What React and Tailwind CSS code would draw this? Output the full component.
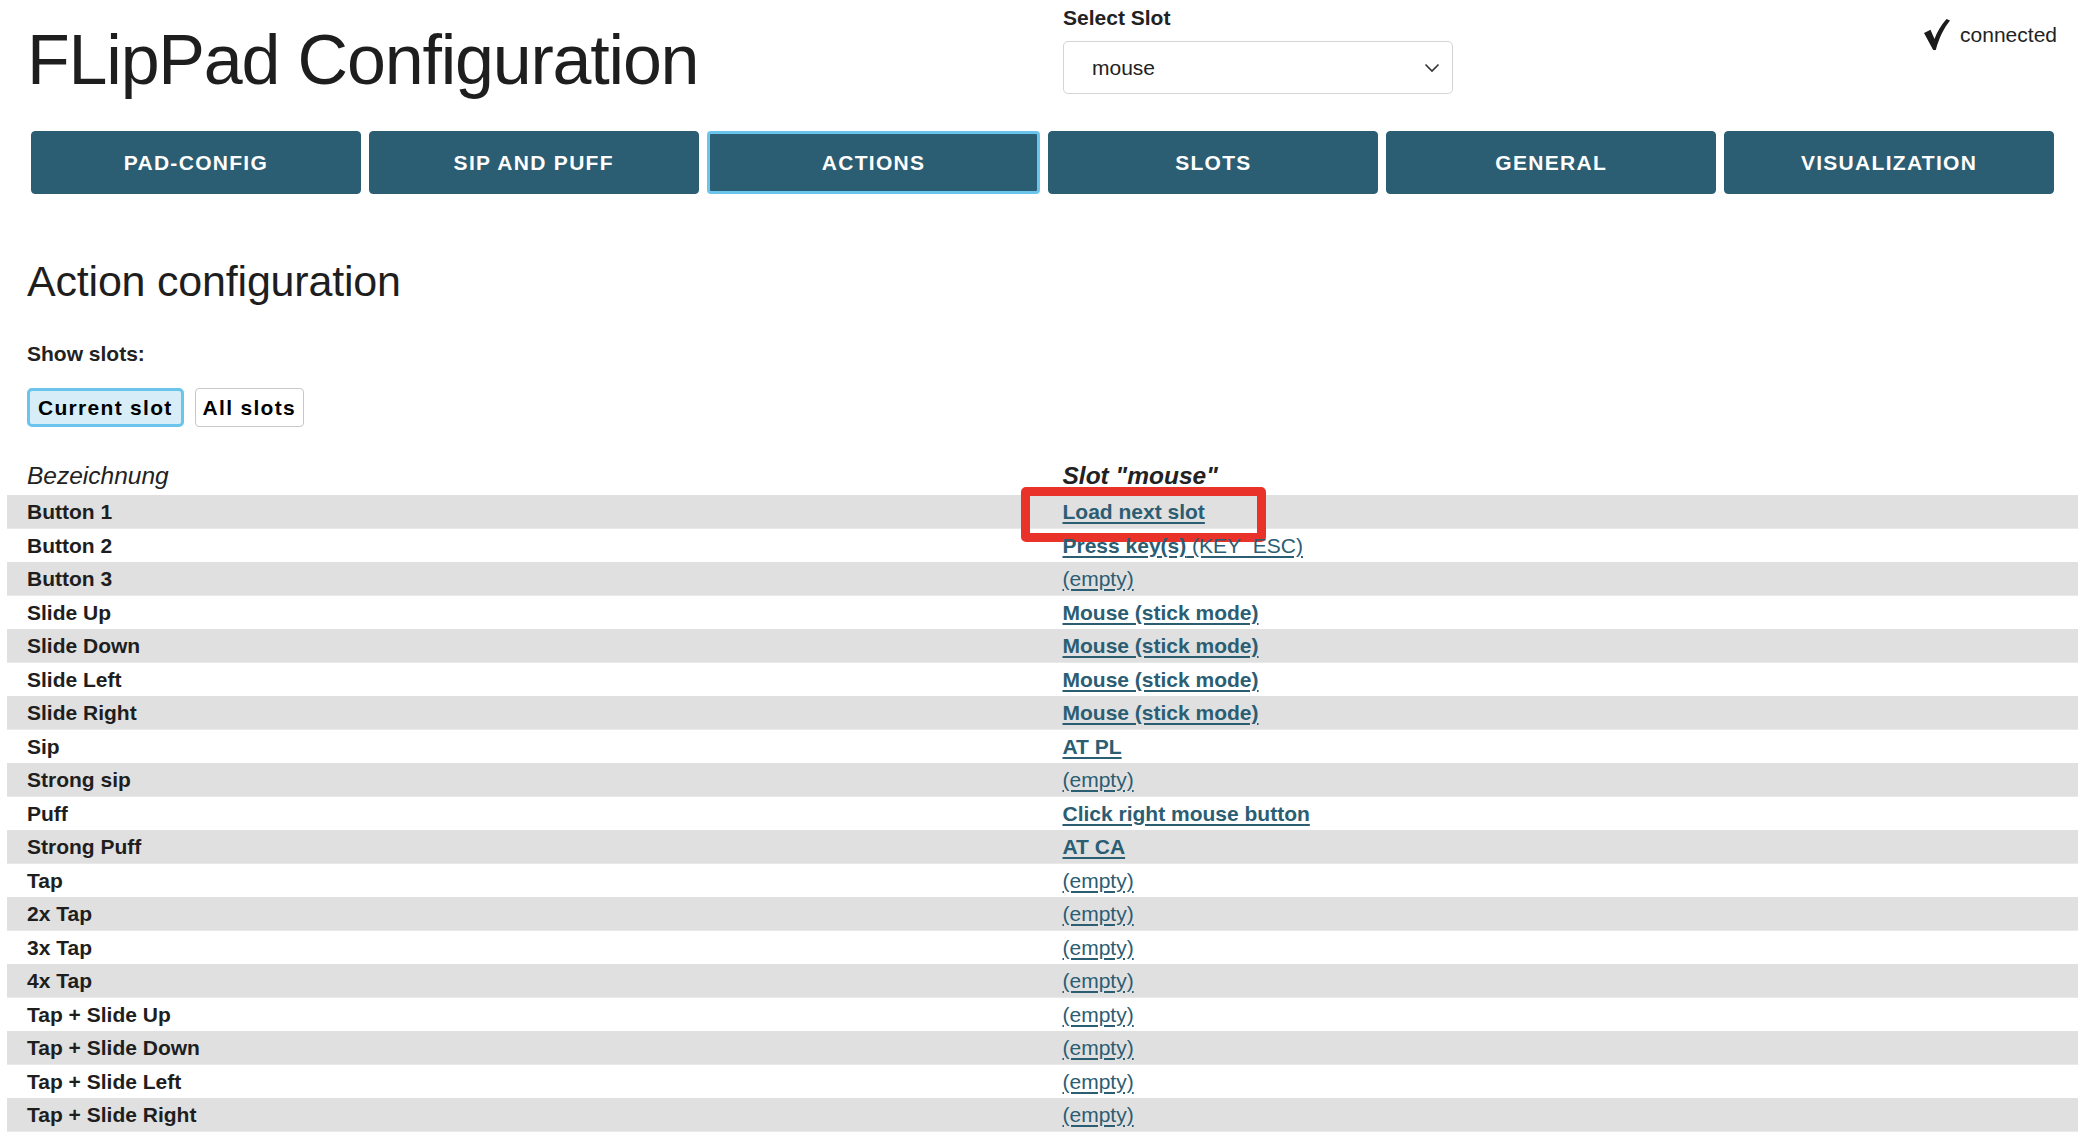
import { useState } from 'react';

const tabs = ['PAD-CONFIG', 'SIP AND PUFF', 'ACTIONS', 'SLOTS', 'GENERAL', 'VISUALIZATION'];

// action rows: [label, bold part, normal part]
const rows = [
  ['Button 1', 'Load next slot', ''],
  ['Button 2', 'Press key(s)', ' (KEY_ESC)'],
  ['Button 3', '', '(empty)'],
  ['Slide Up', 'Mouse (stick mode)', ''],
  ['Slide Down', 'Mouse (stick mode)', ''],
  ['Slide Left', 'Mouse (stick mode)', ''],
  ['Slide Right', 'Mouse (stick mode)', ''],
  ['Sip', 'AT PL', ''],
  ['Strong sip', '', '(empty)'],
  ['Puff', 'Click right mouse button', ''],
  ['Strong Puff', 'AT CA', ''],
  ['Tap', '', '(empty)'],
  ['2x Tap', '', '(empty)'],
  ['3x Tap', '', '(empty)'],
  ['4x Tap', '', '(empty)'],
  ['Tap + Slide Up', '', '(empty)'],
  ['Tap + Slide Down', '', '(empty)'],
  ['Tap + Slide Left', '', '(empty)'],
  ['Tap + Slide Right', '', '(empty)'],
];

function CheckIcon() {
  return (
    <svg width="26" height="31" viewBox="0 0 26 31" className="shrink-0">
      <path
        d="M0 14 L6.5 10.7 L10.5 20 C13 13 17 6 22.5 0 L26 1.5 C20 9 15 19 11.8 31 L9.2 31 Z"
        fill="#1c1c1c"
      />
    </svg>
  );
}

export default function App() {
  const [activeTab, setActiveTab] = useState('ACTIONS');
  const [showAll, setShowAll] = useState(false);

  return (
    <div className="min-h-screen bg-white text-[#222] text-[21px] font-['Liberation_Sans',Arial,sans-serif] overflow-hidden">
      {/* Header */}
      <div className="grid grid-cols-[1036px_1fr] pl-[27px] pr-[37px]">
        <h1 className="mt-[25px] text-[70px] leading-none tracking-[-1.2px] font-normal text-[#1e1e1e]">
          FLipPad Configuration
        </h1>
        <div className="flex justify-between">
          <div>
            <div className="mt-[6px] h-[24px] leading-[24px] font-bold text-[21px]">Select Slot</div>
            <div className="mt-[11px] w-[390px] h-[53px] border border-[#d4d4d4] rounded-[5px] flex items-center justify-between pl-[28px] pr-[12px]">
              <span>mouse</span>
              <svg width="16" height="10" viewBox="0 0 16 10" fill="none">
                <path d="M1.5 1.5 L8 8 L14.5 1.5" stroke="#333" strokeWidth="1.6" />
              </svg>
            </div>
          </div>
          <div className="flex items-center gap-[10px] h-[31px] mt-[19px]">
            <CheckIcon />
            <span className="text-[21px] text-[#222]">connected</span>
          </div>
        </div>
      </div>

      {/* Tabs */}
      <div className="flex gap-[8px] mt-[36px] pl-[31px] pr-[40px]">
        {tabs.map((tab) => (
          <button
            key={tab}
            onClick={() => setActiveTab(tab)}
            className={
              'flex-1 h-[63px] rounded-[4px] bg-[#2b5d73] text-white font-bold text-[21px] tracking-[1.3px] ' +
              (activeTab === tab ? 'border-[3px] border-[#6ac4ec]' : 'border border-[#2b5d73]')
            }
          >
            {tab}
          </button>
        ))}
      </div>

      {/* Action configuration */}
      <div className="pl-[27px]">
        <h2 className="mt-[66px] text-[43px] leading-none tracking-[-0.2px] font-normal text-[#1e1e1e]">
          Action configuration
        </h2>
        <div className="mt-[39px] h-[24px] leading-[24px] font-bold">Show slots:</div>
        <div className="mt-[22px] flex gap-[11px]">
          <button
            onClick={() => setShowAll(false)}
            className={
              'h-[39px] rounded-[5px] font-bold tracking-[1.3px] text-black ' +
              (!showAll ? 'bg-[#d7eef9] border-[3px] border-[#6ac4ec] px-[8px]' : 'bg-white border border-[#c8c8c8] px-[10px]')
            }
          >
            Current slot
          </button>
          <button
            onClick={() => setShowAll(true)}
            className={
              'h-[39px] rounded-[4px] font-bold tracking-[1.3px] text-black ' +
              (showAll ? 'bg-[#d7eef9] border-[3px] border-[#6ac4ec] px-[5px]' : 'bg-white border border-[#c8c8c8] px-[7px]')
            }
          >
            All slots
          </button>
        </div>
      </div>

      {/* Table */}
      <div className="mx-[7px] mt-[31px] w-[2071px]">
        <div className="grid grid-cols-2 h-[37px] items-center pb-[6px] text-[24.5px] italic">
          <div className="pl-[20px]">Bezeichnung</div>
          <div className="pl-[20px] font-bold">Slot "mouse"</div>
        </div>
        {rows.map(([label, bold, normal], i) => (
          <div
            key={label}
            className={
              'grid grid-cols-2 h-[33.5px] items-center ' +
              (i % 2 === 0 ? 'bg-[#e0e0e0] border-b border-[#e9e9e9]' : 'bg-white')
            }
          >
            <div className="pl-[20px] font-bold text-[#1e1e1e]">{label}</div>
            <div className="pl-[20px] relative">
              <a href="#" className="text-[#2b5d73] underline underline-offset-[3px]">
                {bold && <span className="font-bold">{bold}</span>}
                {normal}
              </a>
              {i === 0 && (
                <div className="absolute left-[-22px] top-[-9px] w-[245px] h-[55px] border-[9px] border-[#e8322a] rounded-[5px] pointer-events-none" />
              )}
            </div>
          </div>
        ))}
      </div>
    </div>
  );
}
